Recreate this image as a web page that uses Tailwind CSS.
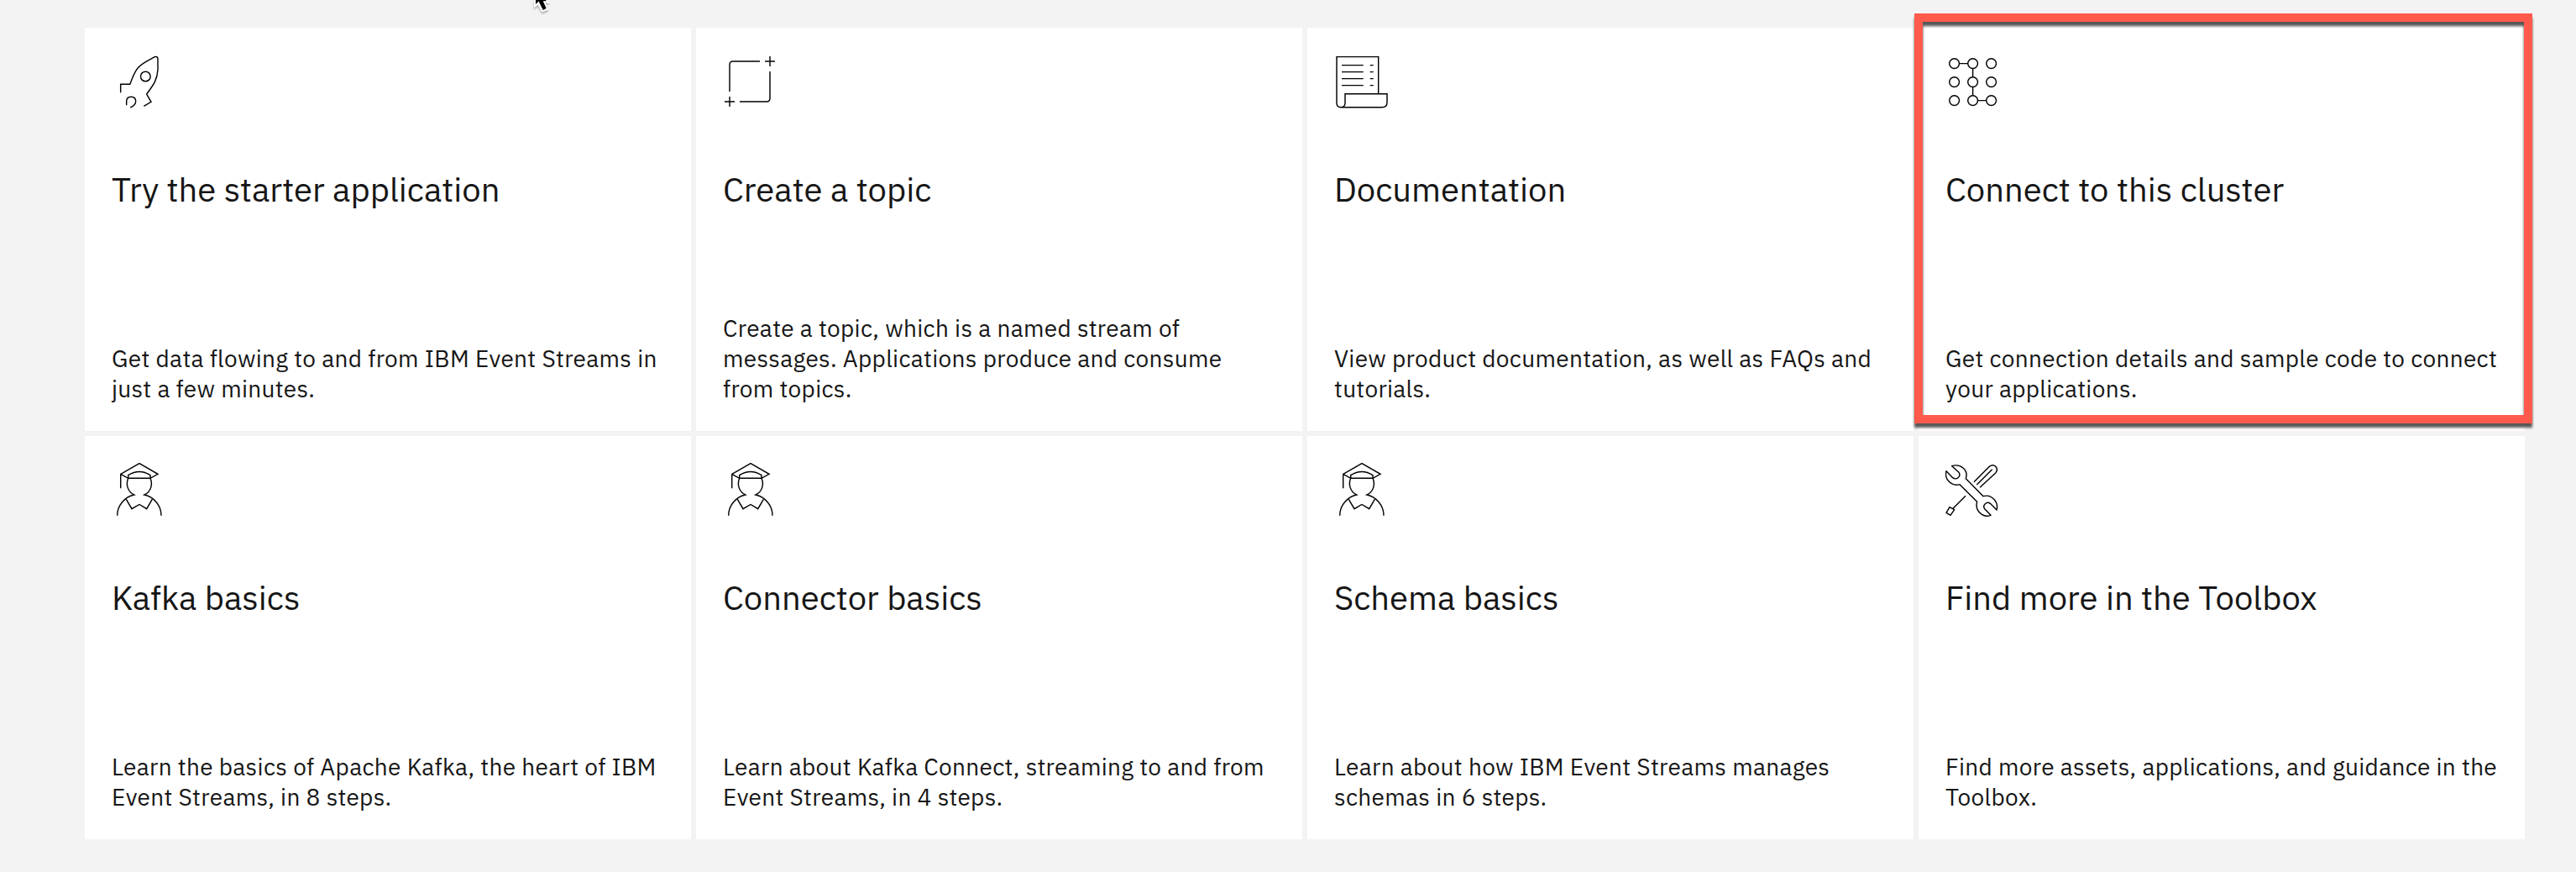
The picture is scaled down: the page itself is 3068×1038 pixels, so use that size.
<!DOCTYPE html>
<html lang="en">
<head>
<meta charset="utf-8">
<title>Event Streams - Getting started</title>
<script src="https://cdn.jsdelivr.net/npm/@tailwindcss/browser@4"></script>
</head>
<body class="w-[3068px] h-[1038px] overflow-hidden relative bg-[#f3f3f3] text-[#161616] font-['IBM_Plex_Sans',Roboto,sans-serif]">
<svg class="hidden">
  <symbol id="graduate" viewBox="0 0 64 64">
    <path d="M10.7 30.3V13.3L33 .6L55 13.3L46 18.3H19.7L10.7 13.3M19.7 18.3V14.7Q33 6.2 46 14.7V18.3M19.7 18.3C16.6 25 19 34.5 26.7 38C15.5 40.5 6.7 50.5 6.7 62.7M46 18.3C49.1 25 47 34.5 39 38C50.2 40.5 59 50.5 59 62.7M17.3 43.3L24 54.7L33 49.5L41.7 54.7L48.3 43.3"/>
  </symbol>
</svg>

<main class="grid grid-cols-4 grid-rows-2 gap-[6px] w-[2906px] h-[966px] ml-[101px] mt-[33px] whitespace-nowrap">
  <article class="bg-white p-8 flex flex-col">
    <svg class="size-16 shrink-0" viewBox="0 0 64 64" fill="none" stroke="#000">
      <g transform="translate(-8 -15) scale(.33333)" stroke-width="4.3">
        <path d="M56 181V151H89C98 131 103 108 120 90C135 74 155 66 178 53Q189 50 189 62V98C187 138 170 157 149 186L165 214L139 229"/>
        <circle cx="145" cy="123" r="17.5"/>
        <path d="M77 226V212C77 202 84 196 93.5 196S110 202 110 212Q110 225 91 234"/>
      </g>
    </svg>
    <h2 class="mt-[70px] text-[40px] leading-[52px]">Try the starter application</h2>
    <p class="mt-auto text-[28px] leading-9 tracking-[0.32px]">Get data flowing to and from IBM Event Streams in<br>just a few minutes.</p>
  </article>

  <article class="bg-white p-8 flex flex-col">
    <svg class="size-16 shrink-0" viewBox="0 0 64 64" fill="none" stroke="#000" stroke-width="1.44">
      <path d="M8 44V12Q8 8 12 8H44M56 20V52Q56 56 52 56H20M56 2V14M50 8H62M8 50V62M2 56H14"/>
    </svg>
    <h2 class="mt-[70px] text-[40px] leading-[52px]">Create a topic</h2>
    <p class="mt-auto text-[28px] leading-9 tracking-[0.32px]">Create a topic, which is a named stream of<br>messages. Applications produce and consume<br>from topics.</p>
  </article>

  <article class="bg-white p-8 flex flex-col">
    <svg class="size-16 shrink-0" viewBox="0 0 64 64" fill="none" stroke="#000" stroke-width="1.44">
      <path d="M52.7 46.7V2.6H3V57.7C3 61 5 62.7 8 62.7S13 61 13 57.7V46.7H63V56.7Q63 62.7 57 62.7H8M9 12.6H34.7M9 20.6H34.7M9 28.6H34.7M9 36.6H34.7M42.7 12.6H46.7M42.7 20.6H46.7M42.7 28.6H46.7M42.7 36.6H46.7"/>
    </svg>
    <h2 class="mt-[70px] text-[40px] leading-[52px]">Documentation</h2>
    <p class="mt-auto text-[28px] leading-9 tracking-[0.32px]">View product documentation, as well as FAQs and<br>tutorials.</p>
  </article>

  <article class="bg-white p-8 flex flex-col">
    <svg class="size-16 shrink-0" viewBox="0 0 64 64" fill="none" stroke="#000" stroke-width="1.44">
      <circle cx="10.6" cy="10.6" r="5.9"/><circle cx="32.6" cy="10.6" r="5.9"/><circle cx="54.6" cy="10.6" r="5.9"/>
      <circle cx="10.6" cy="32.6" r="5.9"/><circle cx="32.6" cy="32.6" r="5.9"/><circle cx="54.6" cy="32.6" r="5.9"/>
      <circle cx="10.6" cy="54.6" r="5.9"/><circle cx="32.6" cy="54.6" r="5.9"/><circle cx="54.6" cy="54.6" r="5.9"/>
      <path d="M16.5 10.6H26.7M32.6 16.5V26.7M32.6 38.5V48.7M38.5 54.6H48.7"/>
    </svg>
    <h2 class="mt-[70px] text-[40px] leading-[52px]">Connect to this cluster</h2>
    <p class="mt-auto text-[28px] leading-9 tracking-[0.32px]">Get connection details and sample code to connect<br>your applications.</p>
  </article>

  <article class="bg-white p-8 flex flex-col">
    <svg class="size-16 shrink-0" fill="none" stroke="#000" stroke-width="1.44"><use href="#graduate"/></svg>
    <h2 class="mt-[70px] text-[40px] leading-[52px]">Kafka basics</h2>
    <p class="mt-auto text-[28px] leading-9 tracking-[0.32px]">Learn the basics of Apache Kafka, the heart of IBM<br>Event Streams, in 8 steps.</p>
  </article>

  <article class="bg-white p-8 flex flex-col">
    <svg class="size-16 shrink-0" fill="none" stroke="#000" stroke-width="1.44"><use href="#graduate"/></svg>
    <h2 class="mt-[70px] text-[40px] leading-[52px]">Connector basics</h2>
    <p class="mt-auto text-[28px] leading-9 tracking-[0.32px]">Learn about Kafka Connect, streaming to and from<br>Event Streams, in 4 steps.</p>
  </article>

  <article class="bg-white p-8 flex flex-col">
    <svg class="size-16 shrink-0" fill="none" stroke="#000" stroke-width="1.44"><use href="#graduate"/></svg>
    <h2 class="mt-[70px] text-[40px] leading-[52px]">Schema basics</h2>
    <p class="mt-auto text-[28px] leading-9 tracking-[0.32px]">Learn about how IBM Event Streams manages<br>schemas in 6 steps.</p>
  </article>

  <article class="bg-white p-8 flex flex-col">
    <svg class="size-16 shrink-0" viewBox="0 0 64 64" fill="none" stroke="#000">
      <g transform="translate(-17 -16) scale(.33333)" stroke-width="4.3" stroke-linejoin="round">
        <path d="M74 59C104 50 134 72 124 104L186 167C216 159 242 187 234 216L211 193C199 184 182 199 191 212L213 235C184 246 155 218 164 187L102 125C72 133 46 106 54 77L77 101C91 111 108 96 99 82Z"/>
        <path d="M153 116L208 61C224 48 243 66 231 83L174 136M163 126L218 71M123 166L78 211M66 206L83 215L69 235L54 226Z"/>
      </g>
    </svg>
    <h2 class="mt-[70px] text-[40px] leading-[52px]">Find more in the Toolbox</h2>
    <p class="mt-auto text-[28px] leading-9 tracking-[0.32px]">Find more assets, applications, and guidance in the<br>Toolbox.</p>
  </article>
</main>

<!-- highlight around the connect card -->
<div class="absolute left-[2280px] top-[16px] w-[736px] h-[488px] border-[10px] border-[#ff5a4c] drop-shadow-[0_5px_1.5px_rgba(0,0,0,0.65)]"></div>

<!-- mouse pointer -->
<svg class="absolute left-[632px] top-0 w-[28px] h-[24px] drop-shadow-[0_2px_1px_rgba(0,0,0,0.3)]" viewBox="0 0 28 24">
  <path d="M4 -4V9.5L8.7 5.7L13.5 14.5L21 11.5L17.5 3.5H23L15 -5Z" fill="#fff"/>
  <path d="M6 -4V5L9.5 1.5L14.7 12L18.7 10L14.7 1.3H19L14 -5Z" fill="#000"/>
</svg>
</body>
</html>
